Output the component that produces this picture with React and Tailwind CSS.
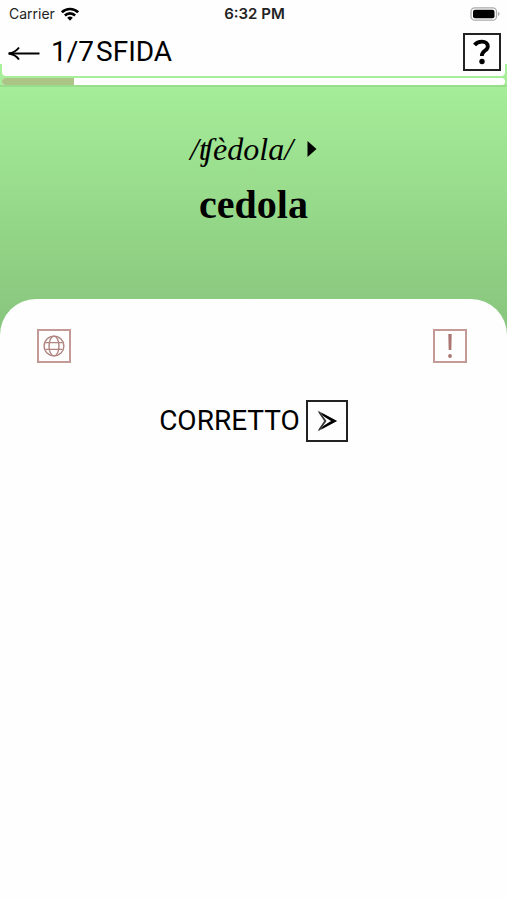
function StatusBar() {
  return (
    <div className="grid h-7 grid-cols-3 items-center pr-[7px] pl-[9px] font-['Inter',sans-serif] text-sm text-[#222]">
      <div className="flex items-center gap-1.5">
        <span>Carrier</span>
        <svg className="h-[14px] w-[18px]" viewBox="0 0 18 14" fill="none" stroke="#000" strokeWidth="2.6" aria-label="Wi-Fi">
          <path d="M0.9 5.3a11.5 11.5 0 0 1 16.2 0" />
          <path d="M3.9 8.5a7.2 7.2 0 0 1 10.2 0" />
          <path d="M9 13.7 6.2 10.8a4 4 0 0 1 5.6 0z" fill="#000" stroke="none" />
        </svg>
      </div>
      <span className="text-center text-[15px] font-semibold whitespace-nowrap">6:32 PM</span>
      <svg className="h-[14px] w-[30px] justify-self-end" viewBox="0 0 30 14" aria-label="Battery">
        <rect x="1" y="0.8" width="25.5" height="12.4" rx="3.8" fill="#fff" stroke="#aaa" strokeWidth="1.3" />
        <rect x="3" y="2.8" width="21.5" height="8.4" rx="2" fill="#000" />
        <path d="M28 4.8q3.2 2.2 0 4.4z" fill="#aaa" />
      </svg>
    </div>
  );
}

function Header() {
  return (
    <header className="relative z-10 flex h-12 items-center pr-[6px] pl-2 font-['Roboto',sans-serif] text-[28px] leading-8">
      <button aria-label="Indietro" className="mr-[11px]">
        <svg className="h-4 w-8" viewBox="0 0 32 16" fill="none" stroke="#000" strokeWidth="2">
          <path d="M1 9.5H31.5" />
          <path d="M11 3.5Q7.500 8.500 0.500 9.500Q7.500 10.500 11 15.500" />
        </svg>
      </button>
      <h1 className="flex gap-0.5">
        <span>1/7</span>
        <span>SFIDA</span>
      </h1>
      <button aria-label="Aiuto" className="ml-auto flex size-[38px] items-center justify-center border-2 border-[#222]">
        <svg className="h-7 w-5" viewBox="0 0 20 28" fill="none">
          <path d="M2.6 7C4.4 4.6 7 3.6 10 3.6C13.6 3.6 15.8 5.600 15.800 8.400C15.800 13 9.800 12.200 9.800 18" stroke="#000" strokeWidth="3.8" />
          <circle cx="10" cy="23.5" r="2.7" fill="#000" />
        </svg>
      </button>
    </header>
  );
}

export default function App() {
  return (
    <main className="min-h-screen bg-[#fefefe] text-black">
      <StatusBar />
      <Header />
      <div className="-mt-3 bg-linear-to-b from-[#a8f19b] to-[#88c67d] to-[260px]">
        <div className="mx-0.5 h-3 rounded-b-sm bg-[#fefefe]" />
        <div
          role="progressbar"
          aria-label="Avanzamento"
          aria-valuemin={0}
          aria-valuemax={7}
          aria-valuenow={1}
          className="border-b-2 border-[#98dc8c] px-0.5 pt-0.5"
        >
          <div className="h-[7px] rounded-sm bg-white">
            <div className="h-full w-1/7 rounded-l-sm bg-[#acc486]" />
          </div>
        </div>
        <section className="flex h-[212px] flex-col items-center pt-[42px] font-['Liberation_Serif',serif]">
          <div className="flex items-center gap-3.5">
            <span className="text-[32px] leading-10 italic">/ʧèdola/</span>
            <button aria-label="Ascolta">
              <svg className="h-4 w-[10px]" viewBox="0 0 10 16">
                <path d="M0.5 0L9.5 8L0.5 16Z" fill="#000" />
              </svg>
            </button>
          </div>
          <h2 className="mt-3 text-[40px] leading-12 font-bold">cedola</h2>
        </section>
        <section className="rounded-t-[36px] bg-[#fefefe] px-[37px] pt-[30px]">
          <div className="flex justify-between pr-[3px]">
            <button aria-label="Traduzione" className="flex size-[34px] items-center justify-center border-2 border-[#c49a96]">
              <svg className="size-[22px]" viewBox="0 0 22 22" fill="none" stroke="#b08580" strokeWidth="1.4">
                <circle cx="11" cy="11" r="9.9" />
                <ellipse cx="11" cy="11" rx="5" ry="9.9" />
                <path d="M2.6 7.6H19.400M2.600 14.400H19.400" />
              </svg>
            </button>
            <button aria-label="Segnala" className="flex size-[34px] items-center justify-center border-2 border-[#c49a96]">
              <svg className="h-[26px] w-1.5" viewBox="0 0 6 26" fill="#a87570">
                <path d="M1.3 1H4.7L4.3 17H1.7Z" />
                <circle cx="3" cy="23" r="1.9" />
              </svg>
            </button>
          </div>
          <div className="mt-[37px] flex items-center justify-center gap-1.5 font-['Roboto',sans-serif] text-[28px] leading-8">
            <span>CORRETTO</span>
            <button aria-label="Avanti" className="flex size-[42px] items-center justify-center border-2 border-[#222]">
              <svg className="h-[22px] w-5" viewBox="0 0 20 22">
                <path d="M0.5 0.5L20 11L0.5 21.500L7 11Z" fill="#777" />
                <path d="M4 2.400L20 11L4 19.600L7.500 14L14 11L7.500 8Z" fill="#000" />
                <path d="M4.500 5L14 11L4.500 17L9.200 11Z" fill="#fff" />
                <path d="M2 2L8.600 11L2 20" fill="none" stroke="#333" strokeWidth="1.4" />
              </svg>
            </button>
          </div>
        </section>
      </div>
    </main>
  );
}
